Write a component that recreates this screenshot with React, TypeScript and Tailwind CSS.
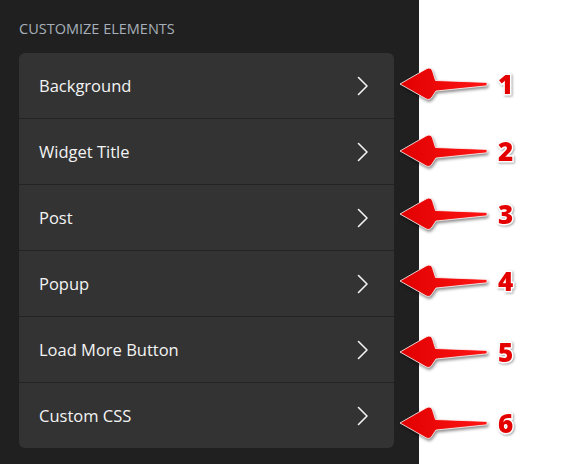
import React from "react";

const items = ["Background", "Widget Title", "Post", "Popup", "Load More Button", "Custom CSS"];
const arrowTops = [84, 151, 214, 281, 352, 423];

function Chevron() {
  return (
    <svg width="12" height="20" viewBox="0 0 12 20" fill="none">
      <polyline points="1.5,1.5 10,10 1.5,18.5" stroke="#f2f2f2" strokeWidth="1.6" strokeLinecap="round" strokeLinejoin="round" />
    </svg>
  );
}

function Arrow({ id }: { id: number }) {
  return (
    <svg width="96" height="40" viewBox="-4 -20 96 40" className="[filter:drop-shadow(1px_2px_1.5px_rgba(0,0,0,0.45))]">
      <defs>
        <linearGradient id={`g${id}`} x1="0" y1="0" x2="1" y2="0">
          <stop offset="0" stopColor="#e00000" />
          <stop offset="1" stopColor="#ff1515" />
        </linearGradient>
      </defs>
      <path
        d="M0,0 L26,-15 Q31,-17.5 32.5,-13 L35.5,-3.5 L87,-1.6 L87,1.8 L36,7 L32,13 Q29.5,17 25.5,14.5 Z"
        fill={`url(#g${id})`}
        stroke="#ffffff"
        strokeWidth="0.8"
        strokeLinejoin="round"
      />
    </svg>
  );
}

export default function App() {
  return (
    <div className="relative w-[562px] h-[464px] bg-white overflow-hidden [font-family:'Open_Sans',sans-serif]">
      <div className="w-[419px] h-[464px] bg-[#202020] px-[19px] pt-[19px]">
        <div className="h-[20px] leading-[20px] text-[14.5px] text-[#a7b0ba]">CUSTOMIZE ELEMENTS</div>
        <div className="mt-[14px] w-[375px] rounded-[6px] bg-[#333333] overflow-hidden">
          {items.map((t, i) => (
            <div
              key={t}
              className={`flex items-center justify-between pl-[20px] pr-[25px] ${i > 0 ? "h-[66px] border-t border-[#232323]" : "h-[65px]"}`}
            >
              <span className="text-[16.5px] text-[#f3f3f3] leading-none pt-[2px]">{t}</span>
              <Chevron />
            </div>
          ))}
        </div>
      </div>
      {arrowTops.map((y, i) => (
        <div key={i} className="absolute flex items-center" style={{ left: 396, top: y - 20 }}>
          <Arrow id={i} />
          <span className="ml-[6px] text-[26px] font-extrabold leading-[40px] text-[#e50000] [-webkit-text-stroke:3px_#ffffff] [paint-order:stroke_fill] [filter:drop-shadow(1px_1.5px_1px_rgba(0,0,0,0.35))]">
            {i + 1}
          </span>
        </div>
      ))}
    </div>
  );
}
